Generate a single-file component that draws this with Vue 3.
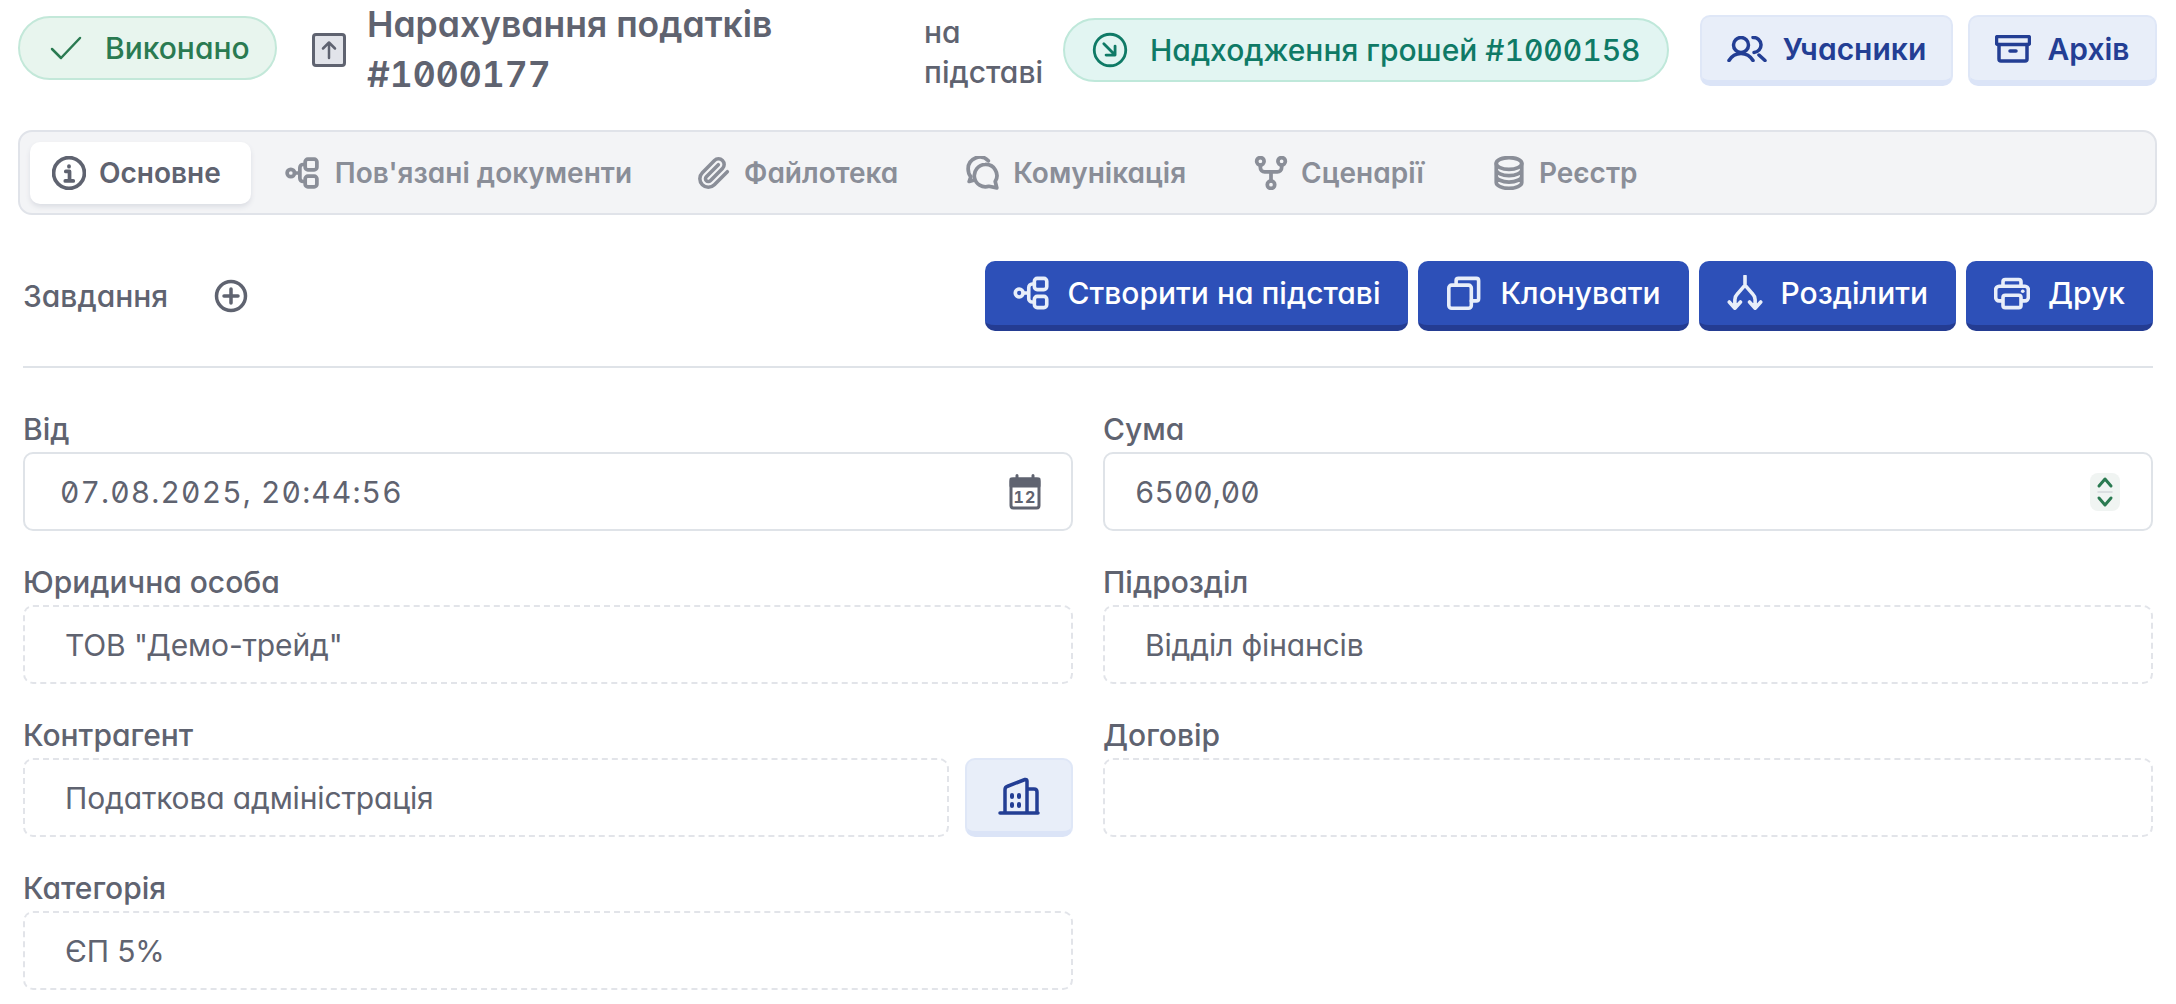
<template>
  <div class="page">
    <header class="head">
      <div class="status">
        <svg class="status-ico" viewBox="0 0 32 32"><path d="M2 17 L11 26 L30 6" /></svg>
        <span>Виконано</span>
      </div>
      <div class="doc-ico">
        <svg viewBox="0 0 34 34"><rect x="1.500" y="1.500" width="31" height="31" rx="2.500" class="doc-box" /><path d="M17 25V10M11 15.500 17 9.500l6 6" class="doc-arrow" /></svg>
      </div>
      <h1 class="title">Нарахування податків <span class="num">#1000177</span></h1>
      <div class="basis">на підставі</div>
      <div class="link-pill">
        <svg class="link-ico" viewBox="0 0 32 32"><circle cx="16" cy="16" r="14" /><path d="M10.500 10.500 20 20M20.500 12.500V20.500H12.500" /></svg>
        <span>Надходження грошей <span class="num">#1000158</span></span>
      </div>
      <button class="soft members">
        <svg viewBox="0 0 40 26"><circle cx="14" cy="9" r="7.500" /><path d="M2 24.500C5 19.500 10 17.500 14 17.500S23 19.500 26 24.500M26 1.500a7.500 7.500 0 0 1 1 15M32 19l6 5.500" /></svg>
        <span>Учасники</span>
      </button>
      <button class="soft archive">
        <svg viewBox="0 0 36 28"><rect x="1.500" y="1.500" width="33" height="8" rx="1.500" /><path d="M4 9.500V24a2 2 0 0 0 2 2H30a2 2 0 0 0 2-2V9.500M15 16h6" /></svg>
        <span>Архів</span>
      </button>
    </header>

    <nav class="tabs">
      <div v-for="tab in tabs" :key="tab.name" class="tab" :class="{ active: tab.active }">
        <svg viewBox="0 0 32 32" v-html="tab.icon"></svg>
        <span>{{ tab.name }}</span>
      </div>
    </nav>

    <div class="content">
      <div class="toolbar">
        <span class="task">Завдання</span>
        <svg class="add" viewBox="0 0 34 34"><circle cx="17" cy="17" r="14.500" /><path d="M17 10v14M10 17h14" /></svg>
        <div class="actions">
          <button v-for="action in actions" :key="action.name" class="solid">
            <svg viewBox="0 0 32 32" v-html="action.icon"></svg>
            <span>{{ action.name }}</span>
          </button>
        </div>
      </div>

      <div class="form">
        <div class="field">
          <label>Від</label>
          <div class="input editable num">
            <span>07.08.2025, 20:44:56</span>
            <svg class="cal" viewBox="0 0 32 36"><path d="M8 1.500v6M24 1.500v6" /><rect x="2" y="5" width="28" height="29" rx="2.500" /><path d="M2 5h28v7H2Z" class="cal-band" /><text x="16" y="29" text-anchor="middle">12</text></svg>
          </div>
        </div>
        <div class="field">
          <label>Сума</label>
          <div class="input editable amount num">
            <span>6500,00</span>
            <div class="spin">
              <svg viewBox="0 0 30 38"><path d="M9 13 15 6l6 7M9 25l6 7 6-7" /><path d="M8 19h14" class="spin-mid" /></svg>
            </div>
          </div>
        </div>
        <div class="field">
          <label>Юридична особа</label>
          <div class="input">ТОВ "Демо-трейд"</div>
        </div>
        <div class="field">
          <label>Підрозділ</label>
          <div class="input">Відділ фінансів</div>
        </div>
        <div class="field">
          <label>Контрагент</label>
          <div class="with-btn">
            <div class="input">Податкова адміністрація</div>
            <button class="soft square">
              <svg viewBox="0 0 44 40"><path d="M3 37h38M8 37V14q0-3 2-3.500L28 3.500q2-.5 2 1.500V37M30 13h7q3 0 3 3V37" /><path d="M15 19v2M22 19v2M15 28v2M22 28v2" class="dots" /></svg>
            </button>
          </div>
        </div>
        <div class="field">
          <label>Договір</label>
          <div class="input"></div>
        </div>
        <div class="field">
          <label>Категорія</label>
          <div class="input">ЄП 5%</div>
        </div>
      </div>
    </div>
  </div>
</template>

<script setup>
const hierarchy = '<circle cx="5.500" cy="16" r="3.500"/><rect x="19" y="3" width="11" height="10" rx="2.500"/><rect x="19" y="19" width="11" height="10" rx="2.500"/><path d="M9 16H14M19 8h-2a3 3 0 0 0-3 3v10a3 3 0 0 0 3 3h2"/>'

const tabs = [
  { name: 'Основне', active: true, icon: '<circle cx="16" cy="16" r="14.500"/><path d="M13 14.500h3.500V23M16 9.500v.5M12.500 23.500h7.500"/>' },
  { name: "Пов'язані документи", icon: hierarchy },
  { name: 'Файлотека', icon: '<g transform="scale(1.333)" stroke-width="2.500"><path d="M21.440 11.050l-9.190 9.190a6 6 0 0 1-8.490-8.490l8.570-8.570A4 4 0 1 1 18 8.840l-8.590 8.570a2 2 0 0 1-2.830-2.830l8.490-8.480"/></g>' },
  { name: 'Комунікація', icon: '<path d="M21 4.500A11 11 0 0 0 2 12c0 3 .8 5.500 2.500 7.500L3 24l5-1.500"/><path d="M18 8a10.500 10.500 0 1 0 3.500 20.500L29 30l-1.500-6A10.500 10.500 0 0 0 18 8Z"/>' },
  { name: 'Сценарії', icon: '<circle cx="6" cy="5" r="3.500"/><circle cx="26" cy="5" r="3.500"/><circle cx="16" cy="27" r="3.500"/><path d="M6 8.500V11a4 4 0 0 0 4 4h12a4 4 0 0 0 4-4V8.500M16 15v8.500"/>' },
  { name: 'Реєстр', icon: '<ellipse cx="16" cy="7" rx="12" ry="5.500"/><path d="M4 7v18c0 3 5.500 5.500 12 5.500S28 28 28 25V7M4 13c0 3 5.500 5.500 12 5.500S28 16 28 13M4 19c0 3 5.500 5.500 12 5.500S28 22 28 19"/>' },
]

const actions = [
  { name: 'Створити на підставі', icon: hierarchy },
  { name: 'Клонувати', icon: '<rect x="2.500" y="9" width="20" height="20.500" rx="2.500"/><path d="M9 9V5a2 2 0 0 1 2-2h16a2 2 0 0 1 2 2v16a2 2 0 0 1-2 2h-4.500"/>' },
  { name: 'Розділити', icon: '<path d="M16 1v8L9.500 16.500C8 18 7 20 7 22v7M16 9l6.500 7.500C24 18 25 20 25 22v7M2 24l5 5.500 5-5.500M20 24l5 5.500 5-5.500"/>' },
  { name: 'Друк', icon: '<path d="M8 10V6a2 2 0 0 1 2-2h12a2 2 0 0 1 2 2v4"/><rect x="1.500" y="10" width="29" height="13" rx="3"/><rect x="8" y="18" width="16" height="11" rx="2" fill="#2d50b8"/><path d="M25.500 14.500h.1"/>' },
]
</script>

<style>
html,
body {
  background: #fff;
}
</style>

<style scoped>
.page {
  width: 2176px;
  height: 1004px;
  overflow: hidden;
  padding: 15px 19px 0 18px;
  box-sizing: border-box;
  font-family: Inter, "Noto Sans", sans-serif;
  font-feature-settings: "cv11";
  color: #5f6370;
}

svg {
  fill: none;
  stroke: currentColor;
  stroke-linecap: round;
  stroke-linejoin: round;
  flex: none;
}

.num {
  font-feature-settings: "cv11", "tnum", "zero";
}

.head {
  display: flex;
  align-items: center;
  height: 71px;
}

.status {
  display: flex;
  align-items: center;
  gap: 23px;
  width: 259px;
  height: 64px;
  box-sizing: border-box;
  margin-bottom: 5px;
  padding-left: 30px;
  border: 2px solid #c3e8d9;
  border-radius: 32px;
  background: #e8f5ee;
  color: #2a7a51;
  font-size: 30px;
  font-weight: 500;
}

.status-ico {
  width: 32px;
  height: 32px;
  stroke-width: 2.500;
}

.doc-ico {
  margin: 0 0 2px 35px;
  width: 34px;
  height: 34px;
}

.doc-ico svg {
  display: block;
  width: 34px;
  height: 34px;
}

.doc-box {
  fill: #e2e4ea;
  stroke: #5f6370;
  stroke-width: 3;
}

.doc-arrow {
  stroke: #5f6370;
  stroke-width: 2.500;
}

.title {
  width: 530px;
  margin: 0 0 2px 21px;
  font-size: 35.500px;
  line-height: 50px;
  font-weight: 600;
}

.basis {
  width: 130px;
  margin: 2px 0 0 27px;
  font-size: 30px;
  line-height: 40px;
  font-weight: 500;
}

.link-pill {
  display: flex;
  align-items: center;
  gap: 22px;
  width: 606px;
  height: 64px;
  box-sizing: border-box;
  margin: 0 0 2px 9px;
  padding-left: 27px;
  border: 2px solid #bfe8da;
  border-radius: 32px;
  background: #e2f5f2;
  color: #0f7a66;
  font-size: 30px;
  font-weight: 500;
  white-space: nowrap;
}

.link-ico {
  width: 36px;
  height: 36px;
  stroke-width: 2.500;
}

button {
  font-family: inherit;
  font-feature-settings: inherit;
  cursor: pointer;
}

.soft {
  display: flex;
  align-items: center;
  justify-content: center;
  gap: 16px;
  height: 71px;
  box-sizing: border-box;
  padding: 0;
  border: 2px solid #dfe7f7;
  border-bottom: 6px solid #dbe4f7;
  border-radius: 10px;
  background: #e8eef9;
  color: #233e94;
  font-size: 30px;
  font-weight: 600;
}

.soft svg {
  width: 40px;
  height: 26px;
  stroke-width: 3.500;
}

.members {
  margin-left: 31px;
  width: 253px;
}

.archive {
  margin-left: 15px;
  width: 189px;
}

.archive svg {
  width: 36px;
  height: 28px;
}

.tabs {
  display: flex;
  align-items: center;
  height: 85px;
  box-sizing: border-box;
  margin-top: 44px;
  padding: 0 10px;
  border: 2px solid #e0e3e9;
  border-radius: 14px;
  background: #f3f4f6;
}

.tab {
  display: flex;
  align-items: center;
  gap: 13px;
  height: 62px;
  box-sizing: border-box;
  padding: 0 33px 0 21px;
  margin-right: 14px;
  border-radius: 10px;
  color: #8a8e98;
  font-size: 28px;
  font-weight: 600;
  white-space: nowrap;
}

.tab svg {
  width: 34px;
  height: 34px;
  stroke-width: 3.500;
}

.tab.active {
  padding: 0 30px 0 22px;
  margin-right: 13px;
  background: #fff;
  color: #5f6370;
  box-shadow: 0 3px 5px #dcdee4;
}

.tab:nth-child(2) {
  gap: 16px;
  padding-right: 30px;
}

.content {
  padding: 0 4px 0 5px;
}

.toolbar {
  display: flex;
  align-items: center;
  margin-top: 46px;
  padding-bottom: 35px;
  border-bottom: 2px solid #dfe3e8;
}

.task {
  font-size: 30px;
  font-weight: 500;
}

.add {
  width: 34px;
  height: 34px;
  margin-left: 46px;
  stroke-width: 3.500;
}

.actions {
  display: flex;
  gap: 10px;
  margin-left: auto;
}

.solid {
  display: flex;
  align-items: center;
  gap: 18px;
  height: 70px;
  box-sizing: border-box;
  padding: 0 28px;
  border: none;
  border-bottom: 6px solid #243c92;
  border-radius: 10px;
  background: #2d50b8;
  color: #fff;
  font-size: 30px;
  font-weight: 500;
  white-space: nowrap;
}

.solid svg {
  width: 36px;
  height: 36px;
  stroke: #e8eef9;
  stroke-width: 3.200;
}

.form {
  display: grid;
  grid-template-columns: 1050px 1050px;
  column-gap: 30px;
  row-gap: 21px;
  margin-top: 41px;
}

.field {
  height: 132px;
}

.field label {
  display: block;
  height: 43px;
  line-height: 40px;
  font-size: 30px;
  font-weight: 500;
  white-space: nowrap;
}

.input {
  display: flex;
  align-items: center;
  height: 79px;
  box-sizing: border-box;
  padding-left: 40px;
  border: 2px dashed #e2e4e9;
  border-radius: 10px;
  font-size: 30px;
  letter-spacing: -0.150px;
}

.editable {
  justify-content: space-between;
  padding: 0 30px 0 35px;
  border-style: solid;
  border-color: #dfe3e8;
  letter-spacing: 1.100px;
}

.amount {
  padding: 0 31px 0 30px;
  letter-spacing: 0;
}

.cal {
  width: 32px;
  height: 36px;
  stroke-width: 3;
}

.cal-band {
  fill: currentColor;
}

.cal text {
  font-family: Inter, sans-serif;
  font-size: 16px;
  font-weight: 700;
  fill: currentColor;
  stroke: none;
}

.spin {
  width: 30px;
  height: 38px;
  border-radius: 8px;
  background: #f0f4f2;
}

.spin svg {
  display: block;
  width: 30px;
  height: 38px;
  stroke: #2a7a51;
  stroke-width: 3;
}

.spin-mid {
  stroke: #d4d8dc !important;
  stroke-width: 1.500;
}

.with-btn {
  display: flex;
  gap: 16px;
}

.with-btn .input {
  flex: 1;
}

.square {
  width: 108px;
  height: 79px;
  padding: 0;
  flex: none;
}

.square svg {
  width: 44px;
  height: 40px;
}

.dots {
  stroke-width: 4;
}
</style>
